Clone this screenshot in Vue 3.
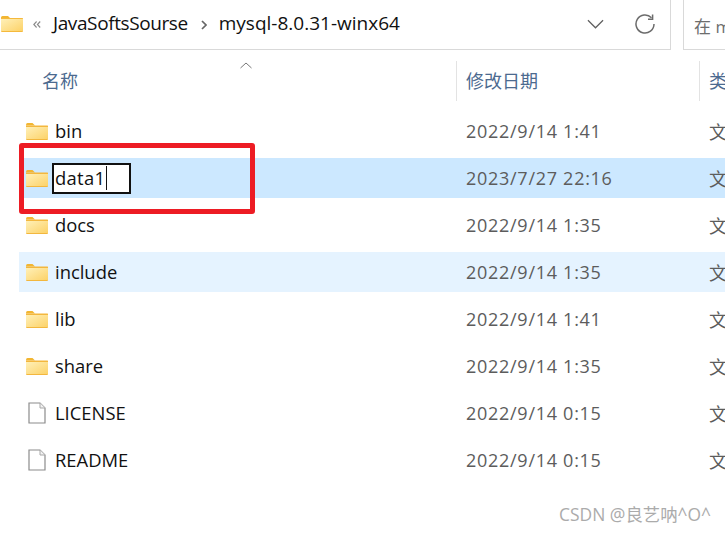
<script setup>
const rows = [
  { name: 'bin', date: '2022/9/14 1:41', type: 'folder' },
  { name: 'data1', date: '2023/7/27 22:16', type: 'folder', state: 'selected', editing: true },
  { name: 'docs', date: '2022/9/14 1:35', type: 'folder' },
  { name: 'include', date: '2022/9/14 1:35', type: 'folder', state: 'hover' },
  { name: 'lib', date: '2022/9/14 1:41', type: 'folder' },
  { name: 'share', date: '2022/9/14 1:35', type: 'folder' },
  { name: 'LICENSE', date: '2022/9/14 0:15', type: 'file' },
  { name: 'README', date: '2022/9/14 0:15', type: 'file' },
]
</script>

<template>
  <div class="window">
    <header class="toolbar">
      <div class="address">
        <svg class="folder top-folder" viewBox="0 0 22 17">
          <path d="M0 2.5Q0 1 1.5 1H7L9 3H0Z" fill="#f2b632" />
          <path d="M0 3H21.5Q22 3 22 3.5V16Q22 17 21 17H1Q0 17 0 16Z" fill="#f5b93c" />
          <path d="M0 4H22V15.5Q22 16 21 16H1Q0 16 0 15.5Z" fill="url(#fg0)" />
          <defs>
            <linearGradient id="fg0" x1="0" y1="0" x2="1" y2="1">
              <stop offset="0" stop-color="#fff0b8" />
              <stop offset="1" stop-color="#fcd268" />
            </linearGradient>
          </defs>
        </svg>
        <svg class="crumb-icon" viewBox="0 0 8 7">
          <path d="M3.6 0.5 0.8 3.5 3.6 6.5M7.2 0.5 4.4 3.5 7.2 6.5" fill="none" stroke="#8a8a8a" stroke-width="1.1" />
        </svg>
        <span class="crumb crumb-first">JavaSoftsSourse</span>
        <svg class="crumb-sep" viewBox="0 0 6 10">
          <path d="M1 1 5 5 1 9" fill="none" stroke="#666" stroke-width="1.7" />
        </svg>
        <span class="crumb">mysql-8.0.31-winx64</span>
        <svg class="dropdown" viewBox="0 0 18 10">
          <path d="M1 1 9 9 17 1" fill="none" stroke="#5f5f5f" stroke-width="1.3" />
        </svg>
        <svg class="refresh" viewBox="0 0 20 20">
          <path d="M16.5 3.8A9 9 0 1 0 19 10" fill="none" stroke="#6b6b6b" stroke-width="1.5" />
          <path d="M17.6 0.6V5.2H13" fill="none" stroke="#6b6b6b" stroke-width="1.5" />
        </svg>
      </div>
      <div class="search">在 m</div>
    </header>

    <div class="columns">
      <div class="col col-name">名称</div>
      <div class="col col-date">修改日期</div>
      <div class="col col-type">类</div>
      <svg class="sort" viewBox="0 0 12 7">
        <path d="M0.5 6 6 1 11.5 6" fill="none" stroke="#777" stroke-width="1" />
      </svg>
    </div>

    <ul class="list">
      <li v-for="(row, i) in rows" :key="row.name" class="row" :class="row.state">
        <svg v-if="row.type === 'folder'" class="folder" viewBox="0 0 22 17">
          <path d="M0 2Q0 0 1.5 0H6.5L9 2.5H0Z" fill="#f2b632" />
          <path d="M0 2.5H21.5Q22 2.5 22 3V16Q22 17 21 17H1Q0 17 0 16Z" fill="#f3b73e" />
          <path d="M0 4H22V15.5Q22 16 21 16H1Q0 16 0 15.5Z" :fill="`url(#fg${i + 1})`" />
          <defs>
            <linearGradient :id="`fg${i + 1}`" x1="0" y1="0" x2="1" y2="1">
              <stop offset="0" stop-color="#fff0b8" />
              <stop offset="1" stop-color="#fcd268" />
            </linearGradient>
          </defs>
        </svg>
        <svg v-else class="file" viewBox="0 0 18 22">
          <path d="M1 1H12L17 6V21H1Z" fill="#fff" stroke="#8c8c8c" stroke-width="1.2" />
          <path d="M12 1V6H17" fill="#f2f2f2" stroke="#a8a8a8" stroke-width="1" />
        </svg>
        <span v-if="row.editing" class="edit">data1<i class="caret"></i></span>
        <span v-else class="name">{{ row.name }}</span>
        <span class="date">{{ row.date }}</span>
        <span class="type">文</span>
      </li>
    </ul>

    <div class="annotation"></div>
    <div class="watermark">CSDN @良艺呐^O^</div>
  </div>
</template>

<style scoped>
.window {
  position: relative;
  width: 725px;
  height: 533px;
  overflow: hidden;
  background: #fff;
  font-family: "Open Sans", "Noto Sans CJK SC", sans-serif;
  color: #111;
}
.toolbar {
  display: flex;
  gap: 12px;
  height: 50px;
}
.address {
  display: flex;
  align-items: center;
  width: 671px;
  flex: none;
  box-sizing: border-box;
  padding-left: 1px;
  border-right: 1px solid #d9d9d9;
  border-bottom: 1px solid #d9d9d9;
  font-size: 19px;
}
.top-folder {
  width: 22px;
  height: 17px;
  margin-top: -2px;
}
.crumb-icon {
  width: 8px;
  height: 7px;
  margin: 0 0 0 10px;
}
.crumb {
  margin-top: -3px;
  color: #111;
}
.crumb-first {
  margin-left: 12px;
  letter-spacing: -0.4px;
}
.crumb-sep {
  width: 6px;
  height: 10px;
  margin: 0 12px 0 13px;
}
.dropdown {
  width: 17px;
  height: 10px;
  margin-left: auto;
  margin-top: -2px;
}
.refresh {
  width: 20px;
  height: 20px;
  margin: -2px 15px 0 31px;
}
.search {
  flex: 1;
  padding: 13px 0 0 10px;
  border-left: 1px solid #d9d9d9;
  border-bottom: 1px solid #d9d9d9;
  color: #6d6d6d;
  font-size: 17px;
  white-space: nowrap;
  overflow: hidden;
}
.columns {
  position: relative;
  display: flex;
  height: 40px;
  margin-top: 11px;
  font-size: 18px;
  color: #4c6a8f;
}
.col {
  line-height: 40px;
  box-sizing: border-box;
  flex: none;
}
.col-name {
  width: 456px;
  padding-left: 42px;
}
.col-date {
  width: 243px;
  padding-left: 9px;
  border-left: 1px solid #e3e3e3;
}
.col-type {
  padding-left: 9px;
  border-left: 1px solid #e3e3e3;
}
.sort {
  position: absolute;
  left: 240px;
  top: 1px;
  width: 12px;
  height: 7px;
}
.list {
  list-style: none;
  margin: 6px 0 0;
  padding: 4px 0 0 19px;
  display: flex;
  flex-direction: column;
  gap: 7px;
}
.row {
  display: flex;
  align-items: center;
  height: 40px;
  font-size: 18.4px;
}
.row.selected {
  background: #cce8ff;
}
.row.hover {
  background: #e5f3ff;
}
.folder {
  width: 22px;
  height: 17px;
  flex: none;
  margin-left: 7px;
}
.top-folder {
  margin-left: 0;
}
.file {
  width: 18px;
  height: 22px;
  flex: none;
  margin-left: 9px;
  margin-right: 2px;
}
.name {
  margin-left: 7px;
  margin-top: -2px;
  width: 411px;
  flex: none;
  color: #111;
}
.edit {
  display: flex;
  align-items: center;
  flex: none;
  box-sizing: border-box;
  width: 79px;
  height: 31px;
  margin-left: 4px;
  margin-right: 335px;
  padding: 0 0 2px 1px;
  border: 2px solid #111;
  background: #fff;
  color: #111;
  letter-spacing: 0.3px;
}
.caret {
  width: 1px;
  height: 24px;
  margin-left: 1px;
  margin-bottom: -2px;
  background: #111;
}
.date {
  width: 243px;
  flex: none;
  font-size: 18px;
  letter-spacing: 0.72px;
  color: #5c5c5c;
}
.type {
  color: #5c5c5c;
}
.annotation {
  position: absolute;
  left: 19px;
  top: 143px;
  width: 236px;
  height: 71px;
  box-sizing: border-box;
  border: 5px solid #ed1c24;
  border-radius: 3px;
}
.watermark {
  position: absolute;
  right: 14px;
  top: 501px;
  font-size: 17.4px;
  color: #ababab;
}
</style>
